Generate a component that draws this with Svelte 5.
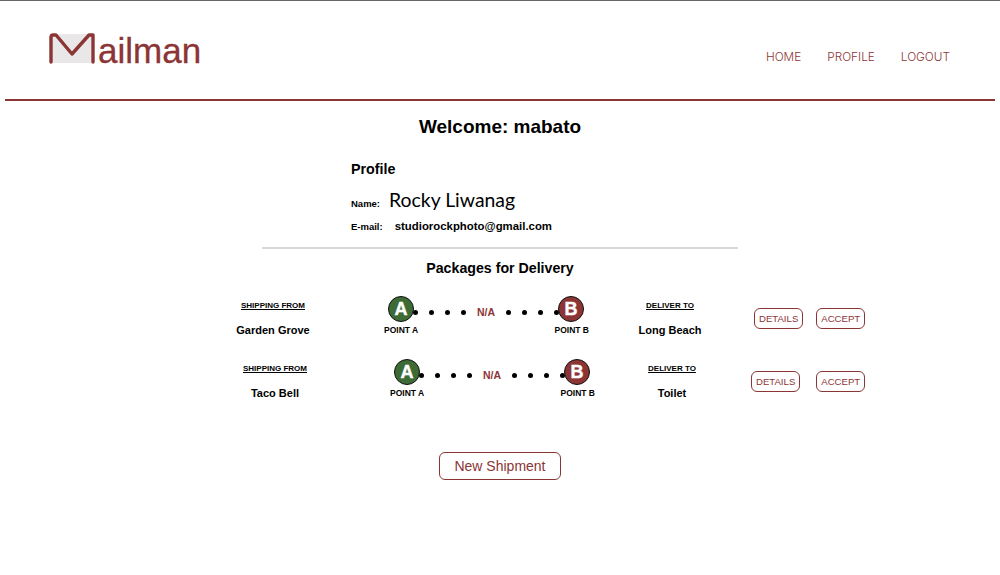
<script lang="ts">
	const packages = [
		{ id: 'one', from: 'Garden Grove', to: 'Long Beach' },
		{ id: 'two', from: 'Taco Bell', to: 'Toilet' }
	];
	const navItems = ['HOME', 'PROFILE', 'LOGOUT'];
</script>

<div class="page">
	<header class="header">
		<a class="logo" href="#top">
			<svg class="logo-mark" width="50" height="32" viewBox="0 0 50 32" aria-hidden="true">
				<rect x="2" y="1" width="41" height="29" fill="#e9e7e8" />
				<path
					d="M3 29 L3 4 Q3 2 5 2 L8 2 L24 21 L41 2 L45 2 L45 29"
					fill="none"
					stroke="#8b3535"
					stroke-width="3.4"
					stroke-linejoin="round"
					stroke-linecap="round"
				/>
			</svg>
			<span class="logo-text">ailman</span>
		</a>
		<nav class="nav">
			{#each navItems as item}
				<a href="#top">{item}</a>
			{/each}
		</nav>
	</header>

	<main class="main">
		<h1>Welcome: mabato</h1>

		<section class="profile">
			<h2>Profile</h2>
			<div class="field name">
				<span class="label">Name:</span>
				<span class="fullname">Rocky Liwanag</span>
			</div>
			<div class="field email">
				<span class="label">E-mail:</span>
				<span class="address">studiorockphoto@gmail.com</span>
			</div>
		</section>

		<hr class="divider" />

		<h3>Packages for Delivery</h3>

		<div class="list">
			{#each packages as pkg}
				<div class="row {pkg.id}">
					<div class="place from">
						<span class="caption">SHIPPING FROM</span>
						<strong>{pkg.from}</strong>
					</div>
					<div class="route">
						<div class="track">
							<span class="pin a">A</span>
							<span class="dots">
								<i></i><i></i><i></i><i></i>
								<b>N/A</b>
								<i></i><i></i><i></i><i></i>
							</span>
							<span class="pin b">B</span>
						</div>
						<div class="points">
							<span>POINT A</span>
							<span>POINT B</span>
						</div>
					</div>
					<div class="place to">
						<span class="caption">DELIVER TO</span>
						<strong>{pkg.to}</strong>
					</div>
					<div class="actions">
						<button type="button">DETAILS</button>
						<button type="button">ACCEPT</button>
					</div>
				</div>
			{/each}
		</div>

		<button class="new" type="button">New Shipment</button>
	</main>
</div>

<style>
	:global(body) {
		margin: 0;
		background: #fff;
		font-family: 'Liberation Sans', Arial, sans-serif;
		color: #000;
	}

	.page {
		height: 575px;
		overflow: hidden;
		border-top: 1px solid #666;
		box-sizing: border-box;
	}

	.header {
		display: flex;
		justify-content: space-between;
		margin: 0 5px;
		height: 98px;
		border-bottom: 2px solid #8b3535;
		box-sizing: content-box;
	}

	.logo {
		display: flex;
		align-items: flex-start;
		margin: 32px 0 0 43px;
		color: #8b3535;
		text-decoration: none;
	}

	.logo-mark {
		display: block;
	}

	.logo-text {
		margin-left: 0;
		font-size: 35px;
		line-height: 36px;
		-webkit-text-stroke: 0.3px #8b3535;
	}

	.nav {
		display: flex;
		gap: 26px;
		margin: 49px 45px 0 0;
	}

	.nav a {
		color: #8b3535;
		font-family: Inter, sans-serif;
		font-weight: 300;
		font-size: 11.8px;
		line-height: 15px;
		text-decoration: none;
	}

	.main {
		display: flex;
		flex-direction: column;
		align-items: center;
	}

	h1 {
		margin: 15px 0 0;
		font-size: 19px;
		line-height: 21px;
	}

	.profile {
		align-self: flex-start;
		margin: 24px 0 0 351px;
	}

	h2 {
		margin: 0;
		font-size: 14.3px;
		line-height: 16px;
	}

	.field {
		display: flex;
		align-items: baseline;
		font-weight: bold;
	}

	.label {
		font-size: 9.5px;
	}

	.name {
		margin-top: 11px;
		line-height: 24px;
		gap: 9px;
	}

	.fullname {
		font-family: Lato, sans-serif;
		font-weight: 400;
		font-size: 19.4px;
	}

	.email {
		margin-top: 3px;
		line-height: 14px;
		gap: 12px;
	}

	.address {
		font-size: 11.4px;
	}

	.divider {
		width: 476px;
		height: 2px;
		margin: 13px 0 0;
		border: 0;
		background: #d8d8d8;
	}

	h3 {
		margin: 11px 0 0;
		font-size: 14.2px;
		line-height: 16px;
	}

	.list {
		align-self: stretch;
	}

	.row {
		display: flex;
		align-items: flex-start;
		height: 63px;
	}

	.row.one {
		margin-top: 20px;
		padding-left: 218px;
	}

	.row.two {
		padding-left: 220px;
	}

	.place {
		display: flex;
		flex-direction: column;
		align-items: center;
		flex: none;
		padding-top: 5px;
	}

	.from {
		width: 110px;
	}

	.to {
		width: 100px;
	}

	.caption {
		font-size: 8px;
		font-weight: bold;
		line-height: 10px;
		text-decoration: underline;
	}

	.place strong {
		margin-top: 13px;
		font-size: 11px;
		line-height: 13px;
	}

	.route {
		flex: none;
		width: 211px;
	}

	.one .route {
		margin-left: 52px;
	}

	.two .route {
		margin-left: 56px;
	}

	.one .to {
		margin-left: 29px;
	}

	.two .to {
		margin-left: 25px;
	}

	.track {
		display: flex;
		align-items: center;
		margin: 0 7px 0 8px;
	}

	.pin {
		flex: none;
		display: flex;
		align-items: center;
		justify-content: center;
		box-sizing: border-box;
		width: 26px;
		height: 26px;
		border: 1.5px solid #111;
		border-radius: 50%;
		color: #fff;
		font-size: 18px;
		font-weight: bold;
		-webkit-text-stroke: 0.4px #fff;
	}

	.pin.a {
		background: #3e6b35;
	}

	.pin.b {
		background: #8b3535;
	}

	.dots {
		flex: 1;
		display: flex;
		align-items: center;
		justify-content: space-between;
		margin: 6px -1px 0;
	}

	.dots i {
		display: block;
		width: 5px;
		height: 5px;
		border-radius: 50%;
		background: #000;
	}

	.dots b {
		color: #8b3535;
		font-size: 10.5px;
	}

	.points {
		display: flex;
		justify-content: space-between;
		margin-top: 3px;
		padding: 0 2px 0 4px;
		font-size: 8.5px;
		font-weight: bold;
		line-height: 10px;
	}

	.actions {
		flex: none;
		display: flex;
		padding-top: 12px;
	}

	.one .actions {
		margin-left: 34px;
		gap: 13px;
	}

	.two .actions {
		margin-left: 29px;
		gap: 16px;
	}

	.actions button {
		box-sizing: border-box;
		height: 21px;
		padding: 0 4px;
		border: 1px solid #8b3535;
		border-radius: 6px;
		background: #fff;
		color: #8b3535;
		font-family: inherit;
		font-size: 9.6px;
	}

	.new {
		box-sizing: border-box;
		width: 122px;
		height: 28px;
		margin-top: 30px;
		padding: 0;
		border: 1px solid #8b3535;
		border-radius: 6px;
		background: #fff;
		color: #8b3535;
		font-family: inherit;
		font-size: 14px;
	}
</style>
